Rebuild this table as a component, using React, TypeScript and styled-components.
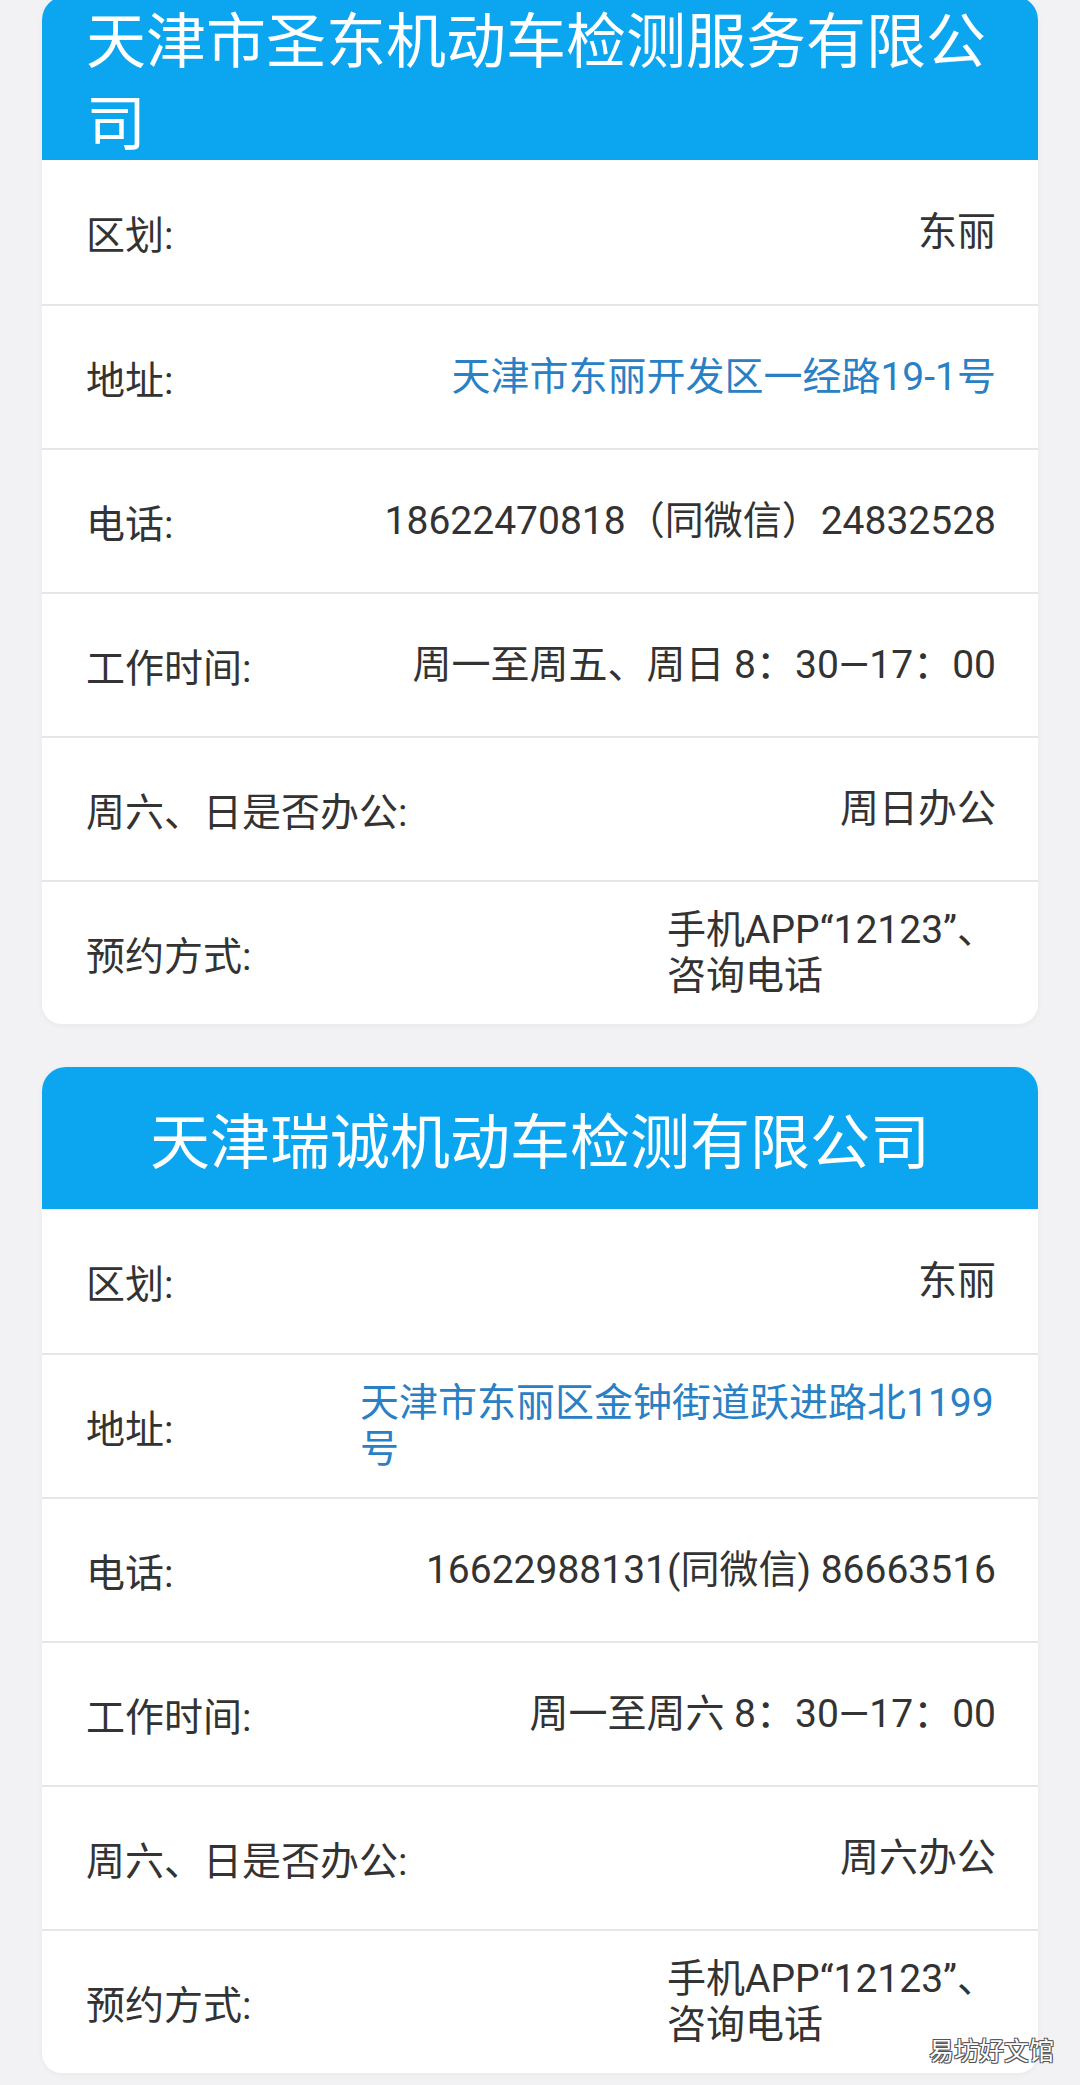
import styled, { createGlobalStyle } from "styled-components";

const GlobalStyle = createGlobalStyle`
  html, body {
    margin: 0;
    padding: 0;
    background-color: #f2f2f4;
  }
`;

const StyledPage = styled.div`
  position: relative;
  height: 2085px;
  padding: 0 42px;
  overflow: hidden;
  font-family: Roboto, "Noto Sans CJK SC", sans-serif;
  color: #333333;
`;

const StyledCardList = styled.div`
  display: flex;
  flex-direction: column;
  gap: 43px;
  margin-top: -4px;
`;

const StyledCard = styled.section`
  background-color: #ffffff;
  border-radius: 24px 24px 20px 20px;
  overflow: hidden;
  box-shadow: 0 2px 6px rgba(0, 0, 0, 0.04);
`;

const StyledCardHeader = styled.header`
  display: flex;
  align-items: center;
  justify-content: center;
  min-height: 142px;
  padding: 0 44px;
  background-color: #0ba6ef;
`;

const StyledCardTitle = styled.h2`
  margin: 0;
  text-align: left;
  font-family: "Noto Sans CJK SC", sans-serif;
  font-weight: 400;
  font-size: 60px;
  line-height: 82px;
  color: #ffffff;
`;

const StyledRow = styled.div`
  display: flex;
  align-items: center;
  justify-content: space-between;
  height: 144px;
  box-sizing: border-box;
  padding: 0 42px 0 44px;
  font-size: 39px;

  & + & {
    border-top: 2px solid #e6e6e9;
  }
`;

const StyledLabel = styled.span`
  white-space: nowrap;
`;

const StyledValue = styled.span<{ $link?: boolean }>`
  display: inline-block;
  max-width: 636px;
  text-align: left;
  line-height: 46px;
  color: ${({ $link }) => ($link ? "#2a80c4" : "#333333")};
`;

const StyledWatermark = styled.div`
  position: absolute;
  right: 26px;
  bottom: 18px;
  font-family: "Noto Sans CJK SC", sans-serif;
  font-size: 25px;
  color: #ffffff;
  text-shadow: -1px -1px 0 #555, 1px -1px 0 #555, -1px 1px 0 #555, 1px 1px 0 #555;
`;

interface InfoRow {
  label: string;
  value: string[];
  link?: boolean;
}

interface Station {
  name: string;
  rows: InfoRow[];
}

const stations: Station[] = [
  {
    name: "天津市圣东机动车检测服务有限公司",
    rows: [
      { label: "区划:", value: ["东丽"] },
      { label: "地址:", value: ["天津市东丽开发区一经路19-1号"], link: true },
      { label: "电话:", value: ["18622470818（同微信）24832528"] },
      { label: "工作时间:", value: ["周一至周五、周日 8：30—17：00"] },
      { label: "周六、日是否办公:", value: ["周日办公"] },
      { label: "预约方式:", value: ["手机APP“12123”、", "咨询电话"] },
    ],
  },
  {
    name: "天津瑞诚机动车检测有限公司",
    rows: [
      { label: "区划:", value: ["东丽"] },
      { label: "地址:", value: ["天津市东丽区金钟街道跃进路北1199号"], link: true },
      { label: "电话:", value: ["16622988131(同微信) 86663516"] },
      { label: "工作时间:", value: ["周一至周六 8：30—17：00"] },
      { label: "周六、日是否办公:", value: ["周六办公"] },
      { label: "预约方式:", value: ["手机APP“12123”、", "咨询电话"] },
    ],
  },
];

const App = (): JSX.Element => {
  return (
    <StyledPage>
      <GlobalStyle />
      <StyledCardList>
        {stations.map((station) => (
          <StyledCard key={station.name}>
            <StyledCardHeader>
              <StyledCardTitle>{station.name}</StyledCardTitle>
            </StyledCardHeader>
            {station.rows.map((row) => (
              <StyledRow key={row.label}>
                <StyledLabel>{row.label}</StyledLabel>
                <StyledValue $link={row.link}>
                  {row.value.map((line, i) => (
                    <span key={line}>
                      {i > 0 && <br />}
                      {line}
                    </span>
                  ))}
                </StyledValue>
              </StyledRow>
            ))}
          </StyledCard>
        ))}
      </StyledCardList>
      <StyledWatermark>易坊好文馆</StyledWatermark>
    </StyledPage>
  );
};

export default App;
